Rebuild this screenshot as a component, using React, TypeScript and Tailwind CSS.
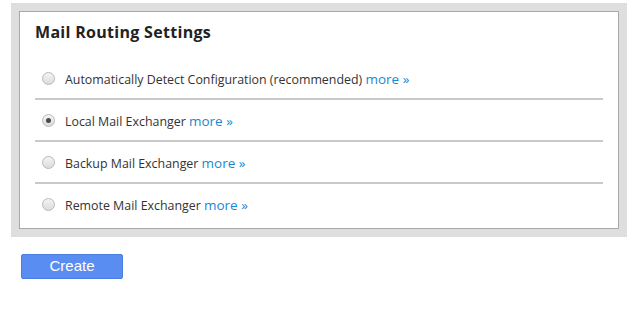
import React from "react";

const rows = [
  { label: "Automatically Detect Configuration (recommended)", checked: false },
  { label: "Local Mail Exchanger", checked: true },
  { label: "Backup Mail Exchanger", checked: false },
  { label: "Remote Mail Exchanger", checked: false },
];

function Radio({ checked }: { checked: boolean }) {
  return (
    <span className="flex h-[13px] w-[13px] shrink-0 items-center justify-center rounded-full border border-[#b9b9b9] bg-gradient-to-b from-[#f4f4f4] to-[#dcdcdc]">
      {checked && <span className="h-[5px] w-[5px] rounded-full bg-[#4a4a4a]" />}
    </span>
  );
}

export default function App() {
  return (
    <div className="h-[310px] w-[638px] bg-white pt-[3px] font-['Open_Sans',sans-serif]">
      <div className="ml-[11px] w-[616px] bg-[#dedede] p-[8px]">
        <div className="h-[218px] border border-[#a9a9a9] bg-white pl-[15px] pr-[15px]">
          <h1 className="pt-[10px] text-[16px] font-bold leading-[20px] tracking-[0.3px] text-[#222]">
            Mail Routing Settings
          </h1>
          <div className="mt-[16px]">
            {rows.map((r, i) => (
              <div
                key={i}
                className={`flex h-[40px] items-center gap-[10px] pl-[7px] ${
                  i < rows.length - 1 ? "border-b-2 border-[#c9c9c9]" : ""
                } box-content`}
              >
                <Radio checked={r.checked} />
                <span className="pt-[2px] text-[12.4px] text-[#333]">
                  {r.label}{" "}
                  <a className="text-[13.5px] text-[#1a87d0]" href="#">
                    more »
                  </a>
                </span>
              </div>
            ))}
          </div>
        </div>
      </div>
      <button className="ml-[21px] mt-[17px] h-[25px] w-[102px] rounded-[2px] border border-[#4a7ee0] bg-[#5a8df2] font-['Liberation_Sans',sans-serif] text-[15px] text-white">
        Create
      </button>
    </div>
  );
}
